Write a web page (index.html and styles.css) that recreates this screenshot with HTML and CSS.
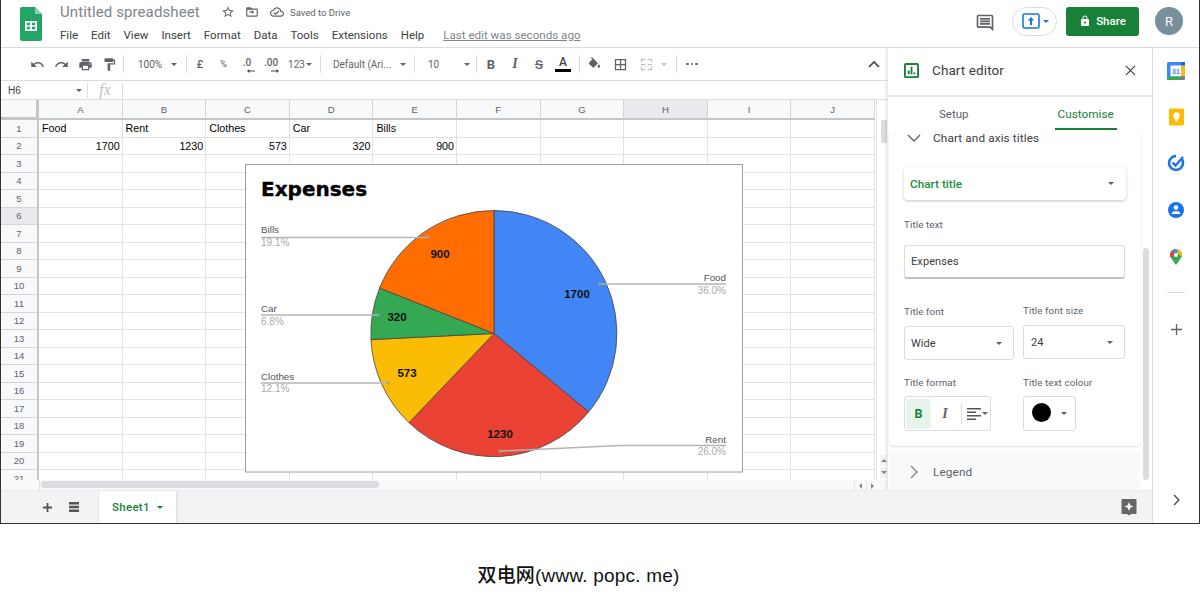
FILE: index.html
```html
<!DOCTYPE html>
<html lang="en">
<head>
<meta charset="utf-8">
<title>Untitled spreadsheet</title>
<link rel="stylesheet" href="styles.css">
</head>
<body>
<div class="app">
  <header class="top">
    <svg class="logo" viewBox="0 0 22 34"><path d="M2 0h13l7 7v25a2 2 0 0 1-2 2H2a2 2 0 0 1-2-2V2a2 2 0 0 1 2-2z" fill="#23a566"/><path d="M15 0l7 7h-7z" fill="#8ed1b1"/><path d="M5 14h12v10H5zm1.8 1.8v2.4h3.3v-2.4zm5.1 0v2.4h3.3v-2.4zm-5.1 4v2.4h3.3v-2.4zm5.1 0v2.4h3.3v-2.4z" fill="#fff" fill-rule="evenodd"/></svg>
    <div class="docinfo">
      <div class="titlerow">
        <span class="doctitle">Untitled spreadsheet</span>
        <svg class="ic14 star" viewBox="0 0 24 24"><path d="M22 9.24l-7.19-.62L12 2 9.19 8.63 2 9.24l5.46 4.73L5.82 21 12 17.27 18.18 21l-1.63-7.03L22 9.24zM12 15.4l-3.76 2.27 1-4.28-3.32-2.88 4.38-.38L12 6.1l1.71 4.04 4.38.38-3.32 2.88 1 4.28L12 15.4z"/></svg>
        <svg class="ic14 move" viewBox="0 0 24 24"><path d="M20 6h-8l-2-2H4c-1.1 0-2 .9-2 2v12c0 1.1.9 2 2 2h16c1.1 0 2-.9 2-2V8c0-1.1-.9-2-2-2zm0 12H4V8h16v10zM12 9l-1.2 1.2 1 1H7v1.6h4.8l-1 1L12 15l4-3z"/></svg>
        <svg class="ic14 cloud" viewBox="0 0 24 24"><path d="M19.35 10.04C18.67 6.59 15.64 4 12 4 9.11 4 6.6 5.64 5.35 8.04 2.34 8.36 0 10.91 0 14c0 3.31 2.69 6 6 6h13c2.76 0 5-2.24 5-5 0-2.64-2.05-4.78-4.65-4.96zM19 18H6c-2.21 0-4-1.79-4-4 0-2.05 1.53-3.76 3.56-3.97l1.07-.11.5-.95C8.08 7.14 9.94 6 12 6c2.62 0 4.88 1.86 5.39 4.43l.3 1.5 1.53.11c1.56.1 2.78 1.41 2.78 2.96 0 1.65-1.35 3-3 3zm-9-3.82l-2.09-2.09L6.5 13.5 10 17l6.01-6.01-1.41-1.41z"/></svg>
        <span class="saved">Saved to Drive</span>
      </div>
      <nav class="menu">
        <span>File</span><span>Edit</span><span>View</span><span>Insert</span><span>Format</span><span>Data</span><span>Tools</span><span>Extensions</span><span>Help</span>
        <a class="lastedit">Last edit was seconds ago</a>
      </nav>
    </div>
    <div class="topright">
      <svg class="comment" viewBox="0 0 24 24"><path d="M21.99 4c0-1.1-.89-2-1.99-2H4c-1.1 0-2 .9-2 2v12c0 1.1.9 2 2 2h14l4 4-.01-18zM20 4v13.17L18.83 16H4V4h16zM6 12h12v2H6zm0-3h12v2H6zm0-3h12v2H6z"/></svg>
      <div class="present">
        <svg viewBox="0 0 18 16" class="presicon"><rect x="1" y="1" width="16" height="14" rx="1.5" fill="none" stroke="#1a73e8" stroke-width="1.6"/><path d="M9 4l3.2 3.4H10V12H8V7.4H5.800z" fill="#1a73e8"/></svg>
        <i class="caret blue"></i>
      </div>
      <button class="share">
        <svg viewBox="0 0 24 24" class="lock"><path d="M18 8h-1V6c0-2.76-2.24-5-5-5S7 3.240 7 6v2H6c-1.100 0-2 .9-2 2v10c0 1.100.9 2 2 2h12c1.100 0 2-.9 2-2V10c0-1.100-.9-2-2-2zm-6 9c-1.100 0-2-.9-2-2s.9-2 2-2 2 .9 2 2-.9 2-2 2zm3.100-9H8.900V6c0-1.710 1.390-3.100 3.100-3.100 1.710 0 3.100 1.390 3.100 3.100v2z"/></svg>
        Share
      </button>
      <div class="avatar">R</div>
    </div>
  </header>

  <div class="body">
    <div class="leftcol">
      <div class="upper">
        <section class="sheetarea">
          <div class="toolbar">
            <span class="tb w24"><svg class="ic" viewBox="0 0 24 24"><path d="M12.500 8c-2.650 0-5.050.99-6.900 2.600L2 7v9h9l-3.620-3.620c1.390-1.160 3.160-1.880 5.120-1.880 3.540 0 6.550 2.310 7.600 5.500l2.370-.78C21.080 11.030 17.150 8 12.500 8z"/></svg></span>
            <span class="tb w24"><svg class="ic" viewBox="0 0 24 24"><path d="M18.400 10.600C16.550 8.990 14.150 8 11.500 8c-4.650 0-8.580 3.030-9.960 7.220L3.900 16c1.050-3.190 4.050-5.500 7.600-5.500 1.950 0 3.730.72 5.120 1.880L13 16h9V7l-3.600 3.600z"/></svg></span>
            <span class="tb w24"><svg class="ic" viewBox="0 0 24 24"><path d="M19 8H5c-1.660 0-3 1.340-3 3v6h4v4h12v-4h4v-6c0-1.660-1.340-3-3-3zm-3 11H8v-5h8v5zm3-7c-.55 0-1-.45-1-1s.45-1 1-1 1 .45 1 1-.45 1-1 1zm-1-9H6v4h12V3z"/></svg></span>
            <span class="tb w24"><svg class="ic" viewBox="0 0 24 24"><path d="M18 4V3c0-.55-.45-1-1-1H5c-.55 0-1 .45-1 1v4c0 .55.45 1 1 1h12c.55 0 1-.45 1-1V6h1v4H9v11c0 .55.45 1 1 1h2c.55 0 1-.45 1-1v-9h8V4h-3z"/></svg></span>
            <i class="tsep s1"></i>
            <span class="tb t zoom">100%<i class="caret"></i></span>
            <i class="tsep s2"></i>
            <span class="tb w24 t b500">£</span>
            <span class="tb w23 t sm">%</span>
            <span class="tb w24 t dec">.0<svg viewBox="0 0 10 5" class="ar"><path d="M10 2v1H3v2L0 2.500 3 0v2z"/></svg></span>
            <span class="tb w24 t dec">.00<svg viewBox="0 0 10 5" class="ar"><path d="M0 2v1h7v2l3-2.500L7 0v2z"/></svg></span>
            <span class="tb t num">123<i class="caret"></i></span>
            <i class="tsep s3"></i>
            <span class="tb t font">Default (Ari...<i class="caret"></i></span>
            <i class="tsep s4"></i>
            <span class="tb t size">10<i class="caret"></i></span>
            <i class="tsep s5"></i>
            <span class="tb w24 fmt bold">B</span>
            <span class="tb w24 fmt ital">I</span>
            <span class="tb w24 fmt strike">S</span>
            <span class="tb w24 colora"><b>A</b><i class="abar"></i></span>
            <i class="tsep s6"></i>
            <span class="tb w28"><svg class="ic" viewBox="0 0 24 24"><path d="M16.560 8.940L7.620 0 6.210 1.410l2.380 2.380-5.150 5.150c-.59.59-.59 1.540 0 2.120l5.500 5.500c.29.29.68.44 1.060.44s.77-.15 1.060-.44l5.500-5.500c.59-.58.59-1.530 0-2.120zM19 11.500s-2 2.170-2 3.500c0 1.100.9 2 2 2s2-.9 2-2c0-1.330-2-3.500-2-3.500z"/></svg></span>
            <span class="tb w24"><svg class="ic" viewBox="0 0 24 24"><path d="M3 3v18h18V3H3zm8 16H5v-6h6v6zm0-8H5V5h6v6zm8 8h-6v-6h6v6zm0-8h-6V5h6v6z"/></svg></span>
            <span class="tb w28 off"><svg class="ic" viewBox="0 0 24 24"><path d="M3 3h7v2H5v3H3zm11 0h7v5h-2V5h-5zM3 16h2v3h5v2H3zm16 0h2v5h-7v-2h5zM3 11h7v2H3zm11 0h7v2h-7zM10 9h1v1h-1zM13 9h1v1h-1zM10 14h1v1h-1zM13 14h1v1h-1z"/></svg></span>
            <span class="tb w8"><i class="caret off"></i></span>
            <i class="tsep s7"></i>
            <span class="tb more"><i></i><i></i><i></i></span>
            <svg class="collapse" viewBox="0 0 12 8"><path d="M1 7l5-5 5 5" fill="none" stroke="#444" stroke-width="1.700"/></svg>
          </div>
          <div class="fbar">
            <span class="cellname">H6<i class="caret sm"></i></span>
            <i class="fsep"></i>
            <span class="fx">fx</span>
            <i class="fsep"></i>
          </div>
          <div class="gridwrap">
            <div class="grid">
              <div class="hrow"><b class="corner"></b><b>A</b><b>B</b><b>C</b><b>D</b><b>E</b><b>F</b><b>G</b><b class="hl">H</b><b>I</b><b>J</b></div>
              <div class="row"><b>1</b><i>Food</i><i>Rent</i><i>Clothes</i><i>Car</i><i>Bills</i><i></i><i></i><i></i><i></i><i></i></div>
              <div class="row"><b>2</b><i class="n">1700</i><i class="n">1230</i><i class="n">573</i><i class="n">320</i><i class="n">900</i><i></i><i></i><i></i><i></i><i></i></div>
              <div class="row"><b>3</b><i></i><i></i><i></i><i></i><i></i><i></i><i></i><i></i><i></i><i></i></div>
              <div class="row"><b>4</b><i></i><i></i><i></i><i></i><i></i><i></i><i></i><i></i><i></i><i></i></div>
              <div class="row"><b>5</b><i></i><i></i><i></i><i></i><i></i><i></i><i></i><i></i><i></i><i></i></div>
              <div class="row"><b class="hl">6</b><i></i><i></i><i></i><i></i><i></i><i></i><i></i><i></i><i></i><i></i></div>
              <div class="row"><b>7</b><i></i><i></i><i></i><i></i><i></i><i></i><i></i><i></i><i></i><i></i></div>
              <div class="row"><b>8</b><i></i><i></i><i></i><i></i><i></i><i></i><i></i><i></i><i></i><i></i></div>
              <div class="row"><b>9</b><i></i><i></i><i></i><i></i><i></i><i></i><i></i><i></i><i></i><i></i></div>
              <div class="row"><b>10</b><i></i><i></i><i></i><i></i><i></i><i></i><i></i><i></i><i></i><i></i></div>
              <div class="row"><b>11</b><i></i><i></i><i></i><i></i><i></i><i></i><i></i><i></i><i></i><i></i></div>
              <div class="row"><b>12</b><i></i><i></i><i></i><i></i><i></i><i></i><i></i><i></i><i></i><i></i></div>
              <div class="row"><b>13</b><i></i><i></i><i></i><i></i><i></i><i></i><i></i><i></i><i></i><i></i></div>
              <div class="row"><b>14</b><i></i><i></i><i></i><i></i><i></i><i></i><i></i><i></i><i></i><i></i></div>
              <div class="row"><b>15</b><i></i><i></i><i></i><i></i><i></i><i></i><i></i><i></i><i></i><i></i></div>
              <div class="row"><b>16</b><i></i><i></i><i></i><i></i><i></i><i></i><i></i><i></i><i></i><i></i></div>
              <div class="row"><b>17</b><i></i><i></i><i></i><i></i><i></i><i></i><i></i><i></i><i></i><i></i></div>
              <div class="row"><b>18</b><i></i><i></i><i></i><i></i><i></i><i></i><i></i><i></i><i></i><i></i></div>
              <div class="row"><b>19</b><i></i><i></i><i></i><i></i><i></i><i></i><i></i><i></i><i></i><i></i></div>
              <div class="row"><b>20</b><i></i><i></i><i></i><i></i><i></i><i></i><i></i><i></i><i></i><i></i></div>
              <div class="row"><b>21</b><i></i><i></i><i></i><i></i><i></i><i></i><i></i><i></i><i></i><i></i></div>
            </div>
            <div class="vscroll">
              <div class="vthumb"></div>
              <div class="varrows"><span class="au"></span><span class="ad"></span></div>
            </div>
            <svg class="chart" viewBox="245 164 498 309">
              <rect x="245.500" y="164.500" width="497" height="307.500" fill="#fff" stroke="#9e9e9e"/>
              <text x="261" y="196" class="ctitle">Expenses</text>
              <g stroke="#444" stroke-width=".9" stroke-opacity=".9">
                <path d="M494 333.500V210.500A123 123 0 0 1 588.600 412z" fill="#4285f4"/>
                <path d="M494 333.500L588.600 412A123 123 0 0 1 409 422.700z" fill="#ea4335"/>
                <path d="M494 333.500L409 422.700A123 123 0 0 1 371 339.600z" fill="#fbbc04"/>
                <path d="M494 333.500L371 339.600A123 123 0 0 1 379.600 288z" fill="#34a853"/>
                <path d="M494 333.500L379.600 288A123 123 0 0 1 494 210.500z" fill="#ff6d01"/>
              </g>
              <g fill="none" stroke="#b4b4b4" stroke-width="1.500">
                <path d="M261 237.500H428"/><path d="M261 315H378"/><path d="M261 383H388"/><path d="M726 284H599"/><path d="M726 445.500H620L500 451"/>
              </g>
              <g fill="#a0a0a0"><circle cx="428" cy="237" r="1.500"/><circle cx="378" cy="315" r="1.500"/><circle cx="388" cy="383" r="1.500"/><circle cx="600" cy="284" r="1.500"/><circle cx="500" cy="451" r="1.500"/></g>
              <g class="clab">
                <text x="261" y="233">Bills</text><text x="261" y="312">Car</text><text x="261" y="380">Clothes</text>
                <text x="726" y="281" text-anchor="end">Food</text><text x="726" y="443" text-anchor="end">Rent</text>
              </g>
              <g class="cpct">
                <text x="261" y="246">19.1%</text><text x="261" y="325">6.8%</text><text x="261" y="392">12.1%</text>
                <text x="726" y="294" text-anchor="end">36.0%</text><text x="726" y="455" text-anchor="end">26.0%</text>
              </g>
              <g class="cval" text-anchor="middle">
                <text x="440" y="258">900</text><text x="397" y="321">320</text><text x="407" y="377">573</text><text x="577" y="298">1700</text><text x="500" y="438">1230</text>
              </g>
            </svg>
          </div>
          <div class="hscroll">
            <div class="hleft"></div>
            <div class="htrack"><div class="hthumb"></div></div>
            <span class="hbtn al"></span><span class="hbtn arr"></span>
          </div>
        </section>

        <aside class="editor">
          <div class="edhead">
            <svg class="edicon" viewBox="0 0 16 16"><path d="M2 0h12a2 2 0 0 1 2 2v12a2 2 0 0 1-2 2H2a2 2 0 0 1-2-2V2a2 2 0 0 1 2-2zm0 2v12h12V2zm2 6h2v4H4zm3-4h2v8H7zm3 6h2v2h-2z" fill="#188038" fill-rule="evenodd"/></svg>
            <span class="edtitle">Chart editor</span>
            <svg class="close" viewBox="0 0 12 12"><path d="M1 1l10 10M11 1L1 11" stroke="#444" stroke-width="1.300"/></svg>
          </div>
          <div class="tabs"><span class="tab">Setup</span><span class="tab on">Customise</span></div>
          <div class="edscroll">
            <div class="card">
              <div class="sect open"><svg class="chev" viewBox="0 0 14 8"><path d="M1 1l6 6 6-6" fill="none" stroke="#5f6368" stroke-width="1.400"/></svg>Chart and axis titles</div>
              <div class="dropcard"><span>Chart title</span><i class="caret"></i></div>
              <label class="lab l1">Title text</label>
              <div class="input">Expenses</div>
              <div class="two t1">
                <div><label class="lab">Title font</label><div class="sel s-a"><span>Wide</span><i class="caret"></i></div></div>
                <div class="up"><label class="lab">Title font size</label><div class="sel s-b"><span>24</span><i class="caret"></i></div></div>
              </div>
              <div class="two t2">
                <div>
                  <label class="lab">Title format</label>
                  <div class="fmtgroup">
                    <span class="fb on">B</span><span class="fb it">I</span><i class="gsep"></i>
                    <span class="alg"><svg viewBox="0 0 14 12"><path d="M0 0h14v1.500H0zM0 3.500h9V5H0zM0 7h14v1.500H0zM0 10.500h9V12H0z" fill="#555"/></svg><i class="caret sm"></i></span>
                  </div>
                </div>
                <div>
                  <label class="lab">Title text colour</label>
                  <div class="colbtn"><i class="dot"></i><i class="caret sm"></i></div>
                </div>
              </div>
            </div>
            <div class="sect legend"><svg class="chev r" viewBox="0 0 8 14"><path d="M1 1l6 6-6 6" fill="none" stroke="#80868b" stroke-width="1.400"/></svg>Legend</div>
            <div class="edthumb"></div>
          </div>
        </aside>
      </div>
      <footer class="tabbar">
        <svg class="plus" viewBox="0 0 12 12"><path d="M5 1h2v4h4v2H7v4H5V7H1V5h4z" fill="#555"/></svg>
        <svg class="list" viewBox="0 0 12 12"><path d="M1 1h10v2.500H1zM1 4.800h10v2.400H1zM1 8.500h10V11H1z" fill="#555"/></svg>
        <div class="sheettab"><span>Sheet1</span><i class="caret green"></i></div>
        <svg class="explore" viewBox="0 0 16 18"><path d="M1.500 1h13a1 1 0 0 1 1 1v13a1 1 0 0 1-1 1H10l-2 1.500L6 16H1.500a1 1 0 0 1-1-1V2a1 1 0 0 1 1-1z" fill="#666"/><path d="M8 4l1.300 3.200L12.500 8.500 9.300 9.800 8 13 6.700 9.800 3.500 8.500 6.700 7.200z" fill="#fff"/></svg>
      </footer>
    </div>

    <aside class="rail">
      <svg class="rico cal" viewBox="0 0 18 18"><rect width="18" height="18" rx="1.500" fill="#4285f4"/><rect x="3.500" y="3.500" width="11" height="11" fill="#fff"/><path d="M14.500 0H18v3.500h-3.500z" fill="#1967d2"/><path d="M0 14.500h14.500V18H1.500A1.500 1.500 0 0 1 0 16.500z" fill="#34a853"/><path d="M14.500 3.500H18v11h-3.500z" fill="#fbbc04"/><path d="M14.500 14.500H18L14.500 18z" fill="#ea4335"/><text x="9" y="12" class="calt" text-anchor="middle">31</text></svg>
      <svg class="rico keep" viewBox="0 0 16 18"><path d="M1.500 0h13A1.500 1.500 0 0 1 16 1.500v15a1.500 1.500 0 0 1-1.500 1.500h-13A1.500 1.500 0 0 1 0 16.500v-15A1.500 1.500 0 0 1 1.500 0z" fill="#fbbc04"/><path d="M8 4a3.500 3.500 0 0 1 2 6.400V12H6v-1.600A3.500 3.500 0 0 1 8 4zM6.500 12.800h3V14h-3z" fill="#fff"/></svg>
      <svg class="rico task" viewBox="0 0 18 18"><path d="M9 2a7 7 0 1 0 7 7" fill="none" stroke="#1a73e8" stroke-width="2.600"/><path d="M16 9a7 7 0 0 0-2-5" fill="none" stroke="#1a73e8" stroke-width="2.600"/><path d="M5.500 8.500L8.500 11.500 16 3" fill="none" stroke="#1a73e8" stroke-width="2.400"/></svg>
      <svg class="rico con" viewBox="0 0 18 18"><circle cx="9" cy="9" r="8" fill="#1a73e8"/><circle cx="9" cy="6.500" r="2.300" fill="#fff"/><path d="M4.500 13c0-2 2.500-3 4.500-3s4.500 1 4.500 3z" fill="#fff"/></svg>
      <svg class="rico map" viewBox="0 0 12 16"><path d="M6 0a6 6 0 0 1 6 6c0 1.200-.5 2.200-1.200 3.200L6 16 1.200 9.200C.5 8.200 0 7.200 0 6a6 6 0 0 1 6-6z" fill="#34a853"/><path d="M6 0a6 6 0 0 1 6 6c0 .6-.1 1-.3 1.500L8 4.500 6 2.500z" fill="#fbbc04"/><path d="M0 6a6 6 0 0 1 1.700-4.200L5 5 1.200 9.200C.5 8.200 0 7.200 0 6z" fill="#ea4335"/><path d="M1.700 1.800A6 6 0 0 1 6 0l2 2.500L5 5z" fill="#4285f4"/><circle cx="6" cy="6" r="2" fill="#fff"/></svg>
      <i class="railsep"></i>
      <svg class="rico plus2" viewBox="0 0 12 12"><path d="M5.300 0h1.400v5.300H12v1.400H6.700V12H5.300V6.700H0V5.300h5.300z" fill="#5f6368"/></svg>
      <svg class="railchev" viewBox="0 0 7 12"><path d="M1 1l5 5-5 5" fill="none" stroke="#444" stroke-width="1.300"/></svg>
    </aside>
  </div>
</div>
<p class="caption">双电网(www. popc. me)</p>
</body>
</html>
```

FILE: styles.css
```css
* { box-sizing: border-box; }
html, body { margin: 0; padding: 0; background: #fff; }
body { font-family: Roboto, "Liberation Sans", sans-serif; color: #3c4043; width: 1200px; height: 600px; overflow: hidden; }
i { font-style: normal; }

.app { height: 524px; border-left: 1px solid #333; border-right: 1px solid #333; border-bottom: 1px solid #333; display: flex; flex-direction: column; background: #fff; }

/* header */
.top { height: 48px; flex: none; border-bottom: 1px solid #dadce0; display: flex; padding-left: 19px; }
.logo { width: 22px; height: 34px; margin-top: 7px; flex: none; }
.docinfo { margin-left: 18px; flex: 1; }
.titlerow { display: flex; align-items: center; height: 24px; }
.doctitle { font-size: 15px; color: #80868b; width: 161px; letter-spacing: .1px; }
.ic14 { width: 14px; height: 14px; fill: #5f6368; flex: none; }
.star { margin-right: 10px; }
.move { margin-right: 11px; }
.cloud { margin-right: 6px; }
.saved { font-size: 9.500px; color: #5f6368; }
.menu { display: flex; gap: 13px; font-size: 11.500px; color: #3c4043; margin-top: 4px; align-items: center; height: 14px; }
.lastedit { margin-left: 6px; color: #80868b; text-decoration: underline; font-size: 11.600px; }
.topright { display: flex; align-items: center; height: 47px; padding-bottom: 5px; width: 259px; flex: none; }
.comment { width: 20px; height: 20px; fill: #5f6368; margin-left: 35px; margin-right: 17px; margin-top: 3px; flex: none; }
.present { width: 45px; height: 29px; flex: none; border: 1px solid #dadce0; border-radius: 15px; display: flex; align-items: center; padding-left: 9px; gap: 3px; }
.presicon { width: 18px; height: 16px; }
.share { width: 73px; height: 29px; flex: none; margin-left: 9px; border: 0; border-radius: 3px; background: #188038; color: #fff; font: 500 11.500px Roboto, sans-serif; display: flex; align-items: center; justify-content: center; gap: 5px; padding: 0; }
.lock { width: 12px; height: 12px; fill: #fff; }
.avatar { width: 28px; height: 28px; flex: none; margin-left: 16px; border-radius: 50%; background: #78909c; color: #fff; font-size: 13px; display: flex; align-items: center; justify-content: center; }

.caret { display: inline-block; width: 0; height: 0; border-left: 3.500px solid transparent; border-right: 3.500px solid transparent; border-top: 3.500px solid #5f6368; }
.caret.sm { border-left-width: 3px; border-right-width: 3px; border-top-width: 3px; }
.caret.blue { border-top-color: #1a73e8; }
.caret.green { border-top-color: #188038; }
.caret.off { border-top-color: #bdc1c6; }

/* body */
.body { flex: 1; display: flex; min-height: 0; }
.leftcol { flex: 1; display: flex; flex-direction: column; min-width: 0; }
.upper { flex: 1; display: flex; min-height: 0; }
.sheetarea { width: 886px; flex: none; display: flex; flex-direction: column; }

/* toolbar */
.toolbar { height: 33px; flex: none; border-bottom: 1px solid #dadce0; display: flex; align-items: center; padding-left: 24px; position: relative; }
.tb { display: flex; align-items: center; justify-content: center; height: 24px; flex: none; }
.w24 { width: 24px; } .w23 { width: 23px; } .w28 { width: 28px; } .w8 { width: 8px; }
.ic { width: 15px; height: 15px; fill: #5f6368; }
.t { font-size: 10px; color: #5f6368; }
.b500 { font-weight: 500; font-size: 11px; }
.t.sm { font-size: 9px; }
.tsep { width: 1px; height: 18px; background: #dadce0; flex: none; }
.s1 { margin-left: 2px; }
.zoom { width: 62px; gap: 9px; justify-content: flex-start; padding-left: 14px; }
.s2 { margin-right: 1px; }
.dec { position: relative; font-weight: 500; font-size: 10px; padding-bottom: 3px; }
.ar { position: absolute; width: 8px; height: 4px; bottom: 3px; right: 4px; fill: #444; }
.num { width: 34px; gap: 1px; }
.s3 { margin-left: 3px; }
.font { width: 93px; gap: 9px; padding-left: 4px; }
.size { width: 61px; gap: 25px; justify-content: flex-start; padding-left: 13px; }
.fmt { font-size: 13px; color: #5f6368; }
.bold { font-weight: 700; margin-left: 2px; }
.ital { font-style: italic; font-family: "Liberation Serif", serif; font-weight: 700; font-size: 14px; }
.strike { text-decoration: line-through; font-weight: 500; }
.colora { flex-direction: column; }
.colora b { font-weight: 500; font-size: 12px; line-height: 12px; color: #444; }
.abar { width: 16px; height: 3px; background: #000; margin-top: 1px; }
.s6 { margin-left: 4px; }
.off .ic { fill: #bdc1c6; }
.s7 { margin-left: 8px; }
.more { width: 30px; gap: 2px; }
.more i { width: 2.500px; height: 2.500px; border-radius: 50%; background: #5f6368; }
.collapse { position: absolute; left: 867px; top: 12px; width: 12px; height: 8px; }

/* formula bar */
.fbar { height: 19px; flex: none; display: flex; align-items: center; border-bottom: 1px solid #dadce0; padding-left: 7px; }
.cellname { width: 79px; font-size: 10px; color: #3c4043; display: flex; justify-content: space-between; align-items: center; padding-right: 5px; font-family: "Liberation Sans", sans-serif; }
.fsep { width: 1px; height: 15px; background: #dadce0; }
.fx { font: italic 16px "Liberation Serif", serif; color: #bdc1c6; width: 34px; text-align: center; }

/* grid */
.gridwrap { flex: 1; position: relative; overflow: hidden; display: flex; min-height: 0; }
.grid { width: 875px; flex: none; overflow: hidden; }
.hrow, .row { display: grid; grid-template-columns: 38px repeat(10, 83.600px); }
.hrow { height: 20px; }
.row { height: 17.500px; }
.hrow b, .row b { font-weight: 400; font-size: 9.500px; color: #5f6368; background: #f8f9fa; display: flex; align-items: center; justify-content: center; border-right: 1px solid #d4d4d4; border-bottom: 1px solid #d4d4d4; font-family: "Liberation Sans", sans-serif; }
.hrow b { border-bottom: 2px solid #c4c7c5; }
.row b { border-right: 2px solid #c4c7c5; }
.hrow .corner { border-right: 3px solid #c4c7c5; border-bottom: 3px solid #c4c7c5; }
.hrow .hl, .row .hl { background: #e8eaed; }
.row i { font: 400 10.700px "Liberation Sans", Arial, sans-serif; color: #000; border-right: 1px solid #e2e3e3; border-bottom: 1px solid #e2e3e3; padding: 0 2px 0 3px; line-height: 16.500px; white-space: nowrap; }
.row .n { text-align: right; }
.vscroll { flex: 1; position: relative; border-left: 1px solid #e2e3e3; }
.vthumb { position: absolute; left: 4px; top: 20px; width: 7px; height: 23px; background: #dadce0; border-radius: 2px; }
.varrows { position: absolute; left: 3px; bottom: 2px; display: flex; flex-direction: column; gap: 1px; }
.varrows span { width: 8px; height: 11px; background: #f1f3f4; position: relative; display: flex; align-items: center; justify-content: center; }
.au::after { content: ""; border-left: 3px solid transparent; border-right: 3px solid transparent; border-bottom: 3px solid #80868b; }
.ad::after { content: ""; border-left: 3px solid transparent; border-right: 3px solid transparent; border-top: 3px solid #80868b; }
.chart { position: absolute; left: 244px; top: 64px; width: 498px; height: 309px; }
.ctitle { font: 700 20px "DejaVu Sans", sans-serif; fill: #000; stroke: #000; stroke-width: .4px; }
.clab text { font: 9.800px "Liberation Sans", sans-serif; fill: #555; }
.cpct text { font: 10px "Liberation Sans", sans-serif; fill: #aaa; }
.cval text { font: 700 11.500px "Liberation Sans", sans-serif; fill: #111; }

.hscroll { height: 10px; flex: none; display: flex; background: #f8f9fa; align-items: stretch; }
.hleft { width: 39px; background: #f8f9fa; border-right: 1px solid #e2e3e3; }
.htrack { width: 814px; position: relative; }
.hthumb { width: 338px; height: 7px; margin: 1px 0 0 1px; border-radius: 3px; background: #dadce0; }
.hbtn { width: 12px; margin-top: 1px; display: flex; align-items: center; justify-content: center; border-left: 1px solid #e2e3e3; }
.al::after { content: ""; border-top: 3px solid transparent; border-bottom: 3px solid transparent; border-right: 3px solid #80868b; }
.arr::after { content: ""; border-top: 3px solid transparent; border-bottom: 3px solid transparent; border-left: 3px solid #80868b; }

/* editor */
.editor { flex: 1; min-width: 0; border-left: 1px solid #e8eaed; display: flex; flex-direction: column; box-shadow: -1px 0 2px rgba(60,64,67,.12); background: #fff; position: relative; }
.edhead { height: 49px; flex: none; border-bottom: 2px solid #e8eaed; display: flex; align-items: center; padding: 0 0 2px 16px; }
.edicon { width: 15px; height: 15px; }
.edtitle { font-size: 13.500px; margin: 0 0 2px 13px; color: #3c4043; width: 193px; letter-spacing: .1px; }
.close { width: 11px; height: 11px; }
.tabs { height: 34px; flex: none; display: flex; position: relative; }
.tab { font-size: 11.500px; color: #5f6368; padding-top: 10px; }
.tab:first-child { margin-left: 51px; }
.tab.on { position: relative; margin-left: 89px; color: #188038; font-size: 11.800px; }
.tab.on::after { content: ""; position: absolute; left: -3px; right: -3px; bottom: 1px; height: 2px; background: #188038; }
.edscroll { flex: 1; min-height: 0; position: relative; overflow: hidden; }
.card { width: 252px; height: 316px; margin-left: 1px; background: #fff; border-radius: 0 0 6px 6px; box-shadow: 0 1px 2px rgba(60,64,67,.18); padding: 0 15px; }
.sect { display: flex; align-items: center; font-size: 11.800px; color: #3c4043; letter-spacing: .1px; }
.sect.open { height: 16px; padding-left: 3px; margin: -1px -15px 0 0; }
.chev { width: 14px; height: 8px; margin-right: 12px; margin-left: 0; }
.chev.r { width: 8px; height: 14px; margin-left: 21px; margin-right: 15px; }
.dropcard { width: 222px; height: 33px; margin-top: 21px; border-radius: 4px; box-shadow: 0 1px 3px rgba(60,64,67,.3); display: flex; align-items: center; justify-content: space-between; padding: 0 12px 0 6px; font-size: 11.800px; font-weight: 500; color: #1e8e3e; }
.lab { display: block; font-size: 9.800px; color: #5f6368; line-height: 12px; letter-spacing: .1px; }
.l1 { margin-top: 19px; }
.input { width: 221px; height: 34px; margin-top: 14px; border: 1px solid #dadce0; border-bottom: 2px solid #bdc1c6; border-radius: 3px; display: flex; align-items: center; padding-left: 6px; font-size: 11px; color: #3c4043; letter-spacing: .1px; }
.two { display: grid; grid-template-columns: 119px 103px; }
.t1 { margin-top: 27px; }
.t2 { margin-top: 17px; }
.up { margin-top: -1px; }
.sel { height: 34px; margin-top: 8px; border: 1px solid #dadce0; border-radius: 3px; display: flex; align-items: center; justify-content: space-between; padding: 0 11px 0 6px; font-size: 11px; color: #3c4043; }
.s-a { width: 110px; }
.s-b { width: 102px; padding-left: 7px; }
.fmtgroup { width: 87px; height: 35px; margin-top: 7px; border: 1px solid #dadce0; border-radius: 3px; display: flex; align-items: center; padding: 1px; }
.fb { width: 25px; height: 30px; display: flex; align-items: center; justify-content: center; font-size: 12.500px; font-weight: 700; color: #188038; background: #e6f4ea; border-radius: 2px; }
.fb.it { background: none; color: #5f6368; width: 28px; font: italic 700 14px "Liberation Serif", serif; }
.gsep { width: 1px; height: 20px; background: #dadce0; margin-left: 2px; margin-right: 5px; }
.alg { display: flex; align-items: center; gap: 1px; }
.alg svg { width: 14px; height: 12px; }
.colbtn { width: 53px; height: 35px; margin-top: 7px; border: 1px solid #dadce0; border-radius: 3px; display: flex; align-items: center; padding-left: 8px; gap: 10px; }
.dot { width: 19px; height: 19px; border-radius: 50%; background: #000; margin-top: -2px; }
.legend { position: absolute; left: 1px; top: 320px; width: 251px; height: 41px; background: #f8f9fa; color: #5f6368; }
.edthumb { position: absolute; right: 3px; top: 117px; width: 6px; height: 232px; border-radius: 3px; background: #dadce0; }

/* tab bar */
.tabbar { height: 33px; flex: none; background: #f1f3f4; display: flex; align-items: center; position: relative; padding-left: 41px; border-top: 1px solid #e8eaed; }
.plus { width: 11px; height: 11px; }
.list { width: 12px; height: 12px; margin-left: 15px; }
.sheettab { width: 80px; height: 32px; margin-left: 18px; background: #fff; border-left: 1px solid #e3e5e8; border-right: 2px solid #e3e5e8; display: flex; align-items: center; padding-left: 13px; gap: 7px; color: #188038; font-size: 11.500px; font-weight: 500; letter-spacing: .3px; }
.explore { width: 16px; height: 18px; margin-left: auto; margin-right: 15px; }

/* rail */
.rail { width: 47px; flex: none; border-left: 1px solid #dadce0; display: flex; flex-direction: column; align-items: center; padding-top: 14px; position: relative; }
.rico { display: block; flex: none; }
.cal { width: 18px; height: 18px; }
.calt { font: 700 7px "Liberation Sans", sans-serif; fill: #4285f4; }
.keep { width: 15px; height: 18px; margin-top: 28px; }
.task { width: 18px; height: 18px; margin-top: 28px; }
.con { width: 18px; height: 18px; margin-top: 29px; }
.map { width: 12px; height: 16px; margin-top: 30px; }
.railsep { width: 18px; height: 1px; background: #dadce0; margin-top: 27px; }
.plus2 { width: 11px; height: 11px; margin-top: 31px; }
.railchev { width: 7px; height: 12px; margin-top: auto; margin-bottom: 17px; }

.caption { margin: 42px 0 0; padding-right: 43px; text-align: center; font: 500 19px/20px "Liberation Sans", "Noto Sans CJK SC", sans-serif; letter-spacing: .2px; color: #111; }
```
